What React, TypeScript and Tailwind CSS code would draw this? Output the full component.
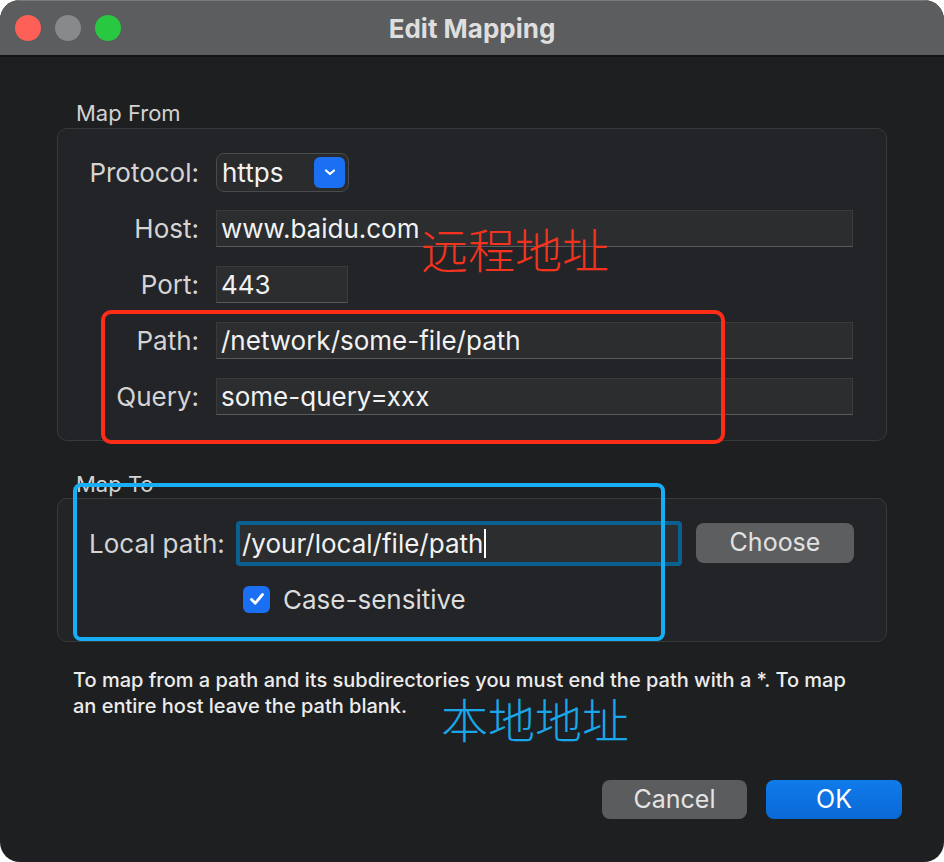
import React from "react";

const font = { fontFamily: "Inter, 'Noto Sans', 'Noto Sans CJK SC', sans-serif" };

function Field({ label, value, width }: { label: string; value: string; width?: string }) {
  return (
    <div className="flex items-center h-[56px]">
      <div className="w-[142px] pr-[1px] text-right text-[26px] text-[#d4d4d4]">{label}</div>
      <div
        className={`ml-4 h-[37px] flex items-center pl-1 bg-[#2c2d2f] border border-[#3a3b3d] border-b-[#58595b] text-[26px] text-[#f2f2f2] ${
          width ?? "flex-1"
        }`}
      >
        {value}
      </div>
    </div>
  );
}

export default function App() {
  return (
    <div className="w-[944px] h-[862px] bg-white" style={font}>
      <div className="relative w-full h-full rounded-[20px] overflow-hidden bg-[#1e1f21] flex flex-col">
        {/* Title bar */}
        <div className="relative h-[57px] shrink-0 bg-[#5c5d5f] border-t border-[#7a7b7d] border-b-2 border-b-[#121314] flex items-center">
          <div className="flex items-center gap-[14px] pl-[15px]">
            <span className="w-[26px] h-[26px] rounded-full bg-[#fe5f57]" />
            <span className="w-[26px] h-[26px] rounded-full bg-[#88898b]" />
            <span className="w-[26px] h-[26px] rounded-full bg-[#28c840]" />
          </div>
          <div className="absolute inset-0 flex items-center justify-center text-[26px] font-bold text-[#dedede]">
            Edit Mapping
          </div>
        </div>

        <div className="px-[57px] flex flex-col">
          {/* Map From */}
          <div className="mt-[44px] pl-[19px] text-[22px] leading-[24px] text-[#d2d2d2]">Map From</div>
          <div className="mt-[3px] rounded-[10px] border border-[#39393b] bg-[#232427] pt-[15px] pb-[16px] pr-[33px]">
            <div className="flex items-center h-[56px]">
              <div className="w-[142px] pr-[1px] text-right text-[26px] text-[#d4d4d4]">Protocol:</div>
              <div className="ml-4 w-[133px] h-[39px] rounded-[8px] border border-[#4a4b4d] bg-[#2a2b2d] flex items-center justify-between pl-[5px] pr-[3px]">
                <span className="text-[26px] text-[#f2f2f2]">https</span>
                <span className="w-[31px] h-[31px] rounded-[6px] bg-[#1b6ff2] flex items-center justify-center">
                  <svg width="14" height="10" viewBox="0 0 14 10">
                    <path d="M3 3.5 L7 7 L11 3.5" stroke="white" strokeWidth="2.2" fill="none" strokeLinecap="round" strokeLinejoin="round" />
                  </svg>
                </span>
              </div>
            </div>
            <Field label="Host:" value="www.baidu.com" />
            <Field label="Port:" value="443" width="w-[132px]" />
            <Field label="Path:" value="/network/some-file/path" />
            <Field label="Query:" value="some-query=xxx" />
          </div>

          {/* Map To */}
          <div className="mt-[31px] pl-[19px] text-[22px] leading-[24px] text-[#d2d2d2]">Map To</div>
          <div className="mt-[2px] rounded-[10px] border border-[#39393b] bg-[#232427] pt-[16px] pb-[14px] pl-[31px]">
            <div className="flex items-center h-[56px]">
              <span className="text-[26px] text-[#d4d4d4] w-[134px] whitespace-nowrap">Local path:</span>
              <div className="ml-[13px] rounded-[4px] p-[4px] bg-[#0b6092]">
                <div className="w-[438px] h-[37px] bg-[#2c2d2f] flex items-center pl-[2px] text-[26px] text-[#f2f2f2]">
                  /your/local/file/path
                  <span className="inline-block w-[2px] h-[29px] bg-white ml-[1px]" />
                </div>
              </div>
              <button className="ml-[14px] w-[158px] h-[40px] rounded-[8px] bg-[#5d5e60] text-[25px] text-[#e2e2e2]">
                Choose
              </button>
            </div>
            <div className="flex items-center h-[56px] pl-[154px]">
              <span className="w-[27px] h-[27px] rounded-[6px] bg-[#1b6ff2] flex items-center justify-center">
                <svg width="18" height="18" viewBox="0 0 18 18">
                  <path d="M3.5 9.5 L7.3 13.2 L14.5 4.5" stroke="white" strokeWidth="2.8" fill="none" strokeLinecap="round" strokeLinejoin="round" />
                </svg>
              </span>
              <span className="ml-[13px] text-[26px] text-[#dcdcdc]">Case-sensitive</span>
            </div>
          </div>

          {/* Help text */}
          <p className="mt-[25px] pl-[16px] text-[20px] leading-[26px] font-medium text-[#ececec] whitespace-nowrap">
            To map from a path and its subdirectories you must end the path with a *. To map
            <br />
            an entire host leave the path blank.
          </p>

          {/* Buttons */}
          <div className="mt-[61px] flex justify-end gap-[19px] -mr-[15px]">
            <button className="w-[145px] h-[39px] rounded-[8px] bg-[#5b5c5e] text-[25px] text-[#e4e4e4]">Cancel</button>
            <button className="w-[136px] h-[39px] rounded-[8px] bg-gradient-to-b from-[#0f7bea] to-[#0a69d6] text-[25px] text-white">
              OK
            </button>
          </div>
        </div>

        {/* Annotations */}
        <div className="absolute left-[101px] top-[310px] w-[624px] h-[134px] border-4 border-[#ff2d16] rounded-[10px]" />
        <div
          className="absolute left-[421px] top-[224px] text-[47px] leading-none text-[#f4331e]"
          style={{ fontFamily: "'Noto Sans CJK SC', sans-serif", fontWeight: 300 }}
        >
          远程地址
        </div>
        <div className="absolute left-[73px] top-[483px] w-[592px] h-[158px] border-4 border-[#18aef5] rounded-[8px]" />
        <div
          className="absolute left-[441px] top-[694px] text-[47px] leading-none text-[#1aa7ea]"
          style={{ fontFamily: "'Noto Sans CJK SC', sans-serif", fontWeight: 300 }}
        >
          本地地址
        </div>
      </div>
    </div>
  );
}
